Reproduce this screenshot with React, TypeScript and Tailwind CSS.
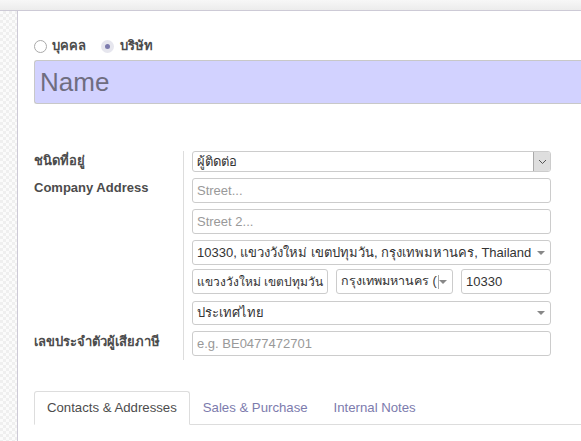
import React from "react";

const FONT = { fontFamily: '"Liberation Sans", Arial, "Noto Sans", sans-serif' };

function Caret() {
  return <span className="ml-auto mr-[5px] shrink-0 border-x-[4px] border-t-[4px] border-x-transparent border-t-[#888]" />;
}

function Box({
  children,
  className = "",
  placeholder = false,
  size = "text-[13px]",
  height = "h-[25px]",
}: {
  children: React.ReactNode;
  className?: string;
  placeholder?: boolean;
  size?: string;
  height?: string;
}) {
  return (
    <div
      className={`flex items-center overflow-hidden whitespace-nowrap rounded-[3px] border border-[#ccc] bg-white ${height} ${size} ${
        placeholder ? "text-[#999]" : "text-[#333]"
      } ${className}`}
    >
      {children}
    </div>
  );
}

function Row({
  label,
  children,
  last = false,
  labelClass = "",
}: {
  label: string;
  children: React.ReactNode;
  last?: boolean;
  labelClass?: string;
}) {
  return (
    <div className="flex">
      <div className={`w-[149px] shrink-0 text-[13px] font-bold ${labelClass}`}>{label}</div>
      <div className={`flex w-[368px] shrink-0 flex-col border-l border-[#ddd] pl-[8px] ${last ? "pb-[4px]" : "pb-[6px]"}`}>
        {children}
      </div>
    </div>
  );
}

export default function App() {
  return (
    <div className="flex h-[441px] w-[581px] flex-col overflow-hidden bg-white text-[#4c4c4c]" style={FONT}>
      {/* top bar */}
      <div className="h-[11px] shrink-0 border-b border-[#cdcad6] bg-gradient-to-b from-[#f7f7f7] to-[#ececec]" />
      <div className="flex min-h-0 flex-1">
        {/* checkered gutter */}
        <div className="w-[17px] shrink-0 bg-[repeating-conic-gradient(#efefef_0%_25%,#fbfbfb_0%_50%)] bg-[length:6px_6px]" />
        {/* sheet */}
        <div className="flex-1 border-l border-[#cdcad6] bg-white pl-[16px]">
          {/* company type */}
          <div className="mt-[27px] flex h-[16px] items-center text-[13px] font-bold">
            <span className="h-[13px] w-[13px] rounded-full border border-[#aaa] bg-white" />
            <span className="ml-[5px]">บุคคล</span>
            <span className="ml-[15px] flex h-[13px] w-[13px] items-center justify-center rounded-full bg-[#e6e6ee]">
              <span className="h-[5px] w-[5px] rounded-full bg-[#7c7bad]" />
            </span>
            <span className="ml-[6px]">บริษัท</span>
          </div>

          {/* name */}
          <div className="mt-[6px] flex h-[44px] items-center rounded-l-[3px] border border-r-0 border-[#c8c8c8] bg-[#d2d2ff] pl-[5px] text-[26px] text-[#6f6d80]">
            Name
          </div>

          {/* address table */}
          <div className="mt-[47px]">
            <Row label="ชนิดที่อยู่">
              <div className="flex h-[21px] items-center overflow-hidden rounded-[3px] border border-[#ccc] bg-white pl-[4px] text-[13px] text-[#333]">
                ผู้ติดต่อ
                <span className="ml-auto flex h-full w-[17px] items-center justify-center border-l border-[#aaa] bg-[#dedede]">
                  <svg width="9" height="6" viewBox="0 0 9 6" fill="none" stroke="#555" strokeWidth="1">
                    <path d="M1 1l3.5 3.5L8 1" />
                  </svg>
                </span>
              </div>
            </Row>
            <Row label="Company Address">
              <Box placeholder className="pl-[4px]">Street...</Box>
              <Box placeholder className="mt-[6px] pl-[4px]">Street 2...</Box>
              <Box className="mt-[6px] pl-[4px]">
                <span className="overflow-hidden">10330, แขวงวังใหม่ เขตปทุมวัน, กรุงเทพมหานคร, Thailand</span>
                <Caret />
              </Box>
              <div className="mt-[4px] flex gap-[8px]">
                <Box size="text-[12px]" className="w-[136px] shrink-0 pl-[4px]">แขวงวังใหม่ เขตปทุมวัน</Box>
                <Box size="text-[12.5px]" className="w-[117px] shrink-0 pl-[4px]">
                  <span className="overflow-hidden">กรุงเทพมหานคร (T</span>
                  <span className="ml-[1px] h-[14px] w-px shrink-0 bg-[#aaa]" />
                  <Caret />
                </Box>
                <Box className="flex-1 pl-[4px]">10330</Box>
              </div>
              <Box height="h-[24px]" className="mt-[7px] pl-[4px]">
                ประเทศไทย
                <Caret />
              </Box>
            </Row>
            <Row label="เลขประจำตัวผู้เสียภาษี" last labelClass="pt-[1px]">
              <Box placeholder className="pl-[4px]">e.g. BE0477472701</Box>
            </Row>
          </div>

          {/* tabs */}
          <div className="mt-[31px] flex h-[34px] border-b border-[#ddd] text-[13.2px]">
            <div className="-mb-px flex items-center rounded-t-[3px] border border-b-white border-[#ddd] bg-white px-[12px] text-[#4c4c4c]">
              Contacts &amp; Addresses
            </div>
            <div className="flex items-center px-[13px] text-[#7c7bad]">Sales &amp; Purchase</div>
            <div className="flex items-center px-[13px] text-[#7c7bad]">Internal Notes</div>
          </div>
        </div>
      </div>
    </div>
  );
}
